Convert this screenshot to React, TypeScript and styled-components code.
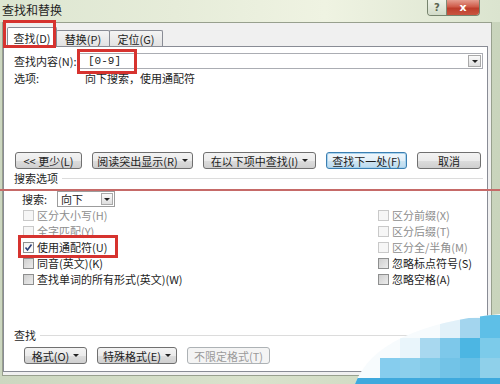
import React from "react";
import styled, { createGlobalStyle, css } from "styled-components";

const Global = createGlobalStyle`
  html, body { margin: 0; padding: 0; }
  body {
    width: 500px; height: 384px; overflow: hidden;
    font-family: "Noto Sans CJK SC", "Liberation Sans", sans-serif;
  }
`;

const Window = styled.div`
  position: relative;
  width: 500px;
  height: 384px;
  display: flex;
  flex-direction: column;
  overflow: hidden;
  background: linear-gradient(to right, #ccd7c0, #d9e2cc 50%, #c9d4bc);
  font-size: 11px;
  color: #1d1d1d;
`;

const TitleBar = styled.div`
  height: 22px;
  flex: none;
  display: flex;
  justify-content: space-between;
  align-items: flex-start;
  background: linear-gradient(to right, #dde6d1 0%, #e6ecd9 35%, #eff3e2 65%, #dbe4cf 100%);
`;

const Title = styled.div`
  padding: 2px 0 0 2px;
  font-size: 12px;
  line-height: 16px;
  color: #1f1f1f;
`;

const Caption = styled.div`
  display: flex;
  height: 15px;
  margin-right: 20px;
  border: 1px solid #76836d;
  border-top: none;
  border-radius: 0 0 4px 4px;
  overflow: hidden;
`;

const CapBtn = styled.div<{ $close?: boolean }>`
  display: flex;
  align-items: center;
  justify-content: center;
  font-family: "DejaVu Sans", sans-serif;
  font-weight: bold;
  ${(p) =>
    p.$close
      ? css`
          width: 32px;
          color: #fff;
          font-size: 11px;
          background: linear-gradient(#e59e90, #cf5b49 45%, #bd3d2b 55%, #c9543f);
        `
      : css`
          width: 18px;
          color: #59634f;
          font-size: 10px;
          border-right: 1px solid #7e8a76;
          background: linear-gradient(#eef2e8, #d2dbc8);
        `}
`;

const Client = styled.div`
  flex: 1;
  margin: 0 8px 8px 2px;
  display: flex;
  flex-direction: column;
  background: #f0f0f0;
  border: 1px solid #98a08e;
`;

const TabStrip = styled.div`
  height: 23px;
  flex: none;
  display: flex;
  align-items: flex-end;
  padding-left: 4px;
`;

const Tab = styled.div<{ $active?: boolean }>`
  box-sizing: border-box;
  display: flex;
  align-items: center;
  justify-content: center;
  border: 1px solid #898c95;
  border-bottom: none;
  border-radius: 2px 2px 0 0;
  font-size: 11px;
  ${(p) =>
    p.$active
      ? css`
          width: 50px;
          height: 20px;
          margin-bottom: -1px;
          background: #fff;
          position: relative;
          z-index: 1;
        `
      : css`
          width: 54px;
          height: 16px;
          margin-left: -1px;
          background: linear-gradient(#f4f4f4, #e2e2e2);
        `}
`;

const Panel = styled.div`
  flex: 1;
  margin: 0 3px 3px 0;
  padding: 6px 4px 0 10px;
  display: flex;
  flex-direction: column;
  background: #fff;
  border: 1px solid #898c95;
`;

const Row = styled.div<{ $mt?: number; $pl?: number; $h?: number }>`
  display: flex;
  align-items: center;
  height: ${(p) => p.$h ?? 16}px;
  margin-top: ${(p) => p.$mt ?? 0}px;
  padding-left: ${(p) => p.$pl ?? 0}px;
  flex: none;
`;

const Label = styled.span<{ $w?: number }>`
  width: ${(p) => (p.$w ? `${p.$w}px` : "auto")};
  flex: none;
  white-space: nowrap;
  line-height: 14px;
`;

const Input = styled.div`
  flex: 1;
  height: 16px;
  box-sizing: border-box;
  border: 1px solid #abadb3;
  display: flex;
  align-items: center;
  padding-left: 10px;
  font-family: "Liberation Mono", monospace;
  font-size: 11px;
`;

const Arrow = styled.span`
  display: inline-block;
  width: 0;
  height: 0;
  border-left: 3px solid transparent;
  border-right: 3px solid transparent;
  border-top: 3px solid #222;
`;

const DropBtn = styled.div<{ $w?: number }>`
  margin-left: auto;
  margin-right: 1px;
  width: ${(p) => p.$w ?? 13}px;
  height: 12px;
  box-sizing: border-box;
  border: 1px solid #a9a9a9;
  background: linear-gradient(#fafafa, #dedede);
  display: flex;
  align-items: center;
  justify-content: center;
`;

const ButtonRow = styled.div<{ $mt: number; $pl: number }>`
  display: flex;
  gap: 10px;
  height: 17px;
  flex: none;
  margin-top: ${(p) => p.$mt}px;
  padding-left: ${(p) => p.$pl}px;
`;

const Button = styled.div<{ $w: number; $focus?: boolean; $disabled?: boolean }>`
  width: ${(p) => p.$w}px;
  box-sizing: border-box;
  height: 17px;
  border: 1px solid #707070;
  border-radius: 3px;
  display: flex;
  align-items: center;
  justify-content: center;
  gap: 4px;
  white-space: nowrap;
  font-size: 11px;
  background: linear-gradient(#f3f3f3 0%, #ebebeb 50%, #dddddd 51%, #cfcfcf 100%);
  ${(p) =>
    p.$focus &&
    css`
      border-color: #3c7fb1;
      box-shadow: inset 0 0 0 1px #a9d3ee;
      background: linear-gradient(#f0f7fc 0%, #e2eff8 50%, #cfe5f3 51%, #bcdaee 100%);
    `}
  ${(p) =>
    p.$disabled &&
    css`
      border-color: #adb2b5;
      background: #f4f4f4;
      color: #9a9a9a;
    `}
`;

const Section = styled.div<{ $mt: number }>`
  display: flex;
  align-items: center;
  height: 14px;
  flex: none;
  margin-top: ${(p) => p.$mt}px;
  gap: 4px;
`;

const Rule = styled.div`
  flex: 1;
  height: 1px;
  background: #dcdcdc;
`;

const Select = styled.div`
  width: 58px;
  height: 16px;
  box-sizing: border-box;
  border: 1px solid #9c9c9c;
  display: flex;
  align-items: center;
  padding-left: 3px;
`;

const Grid = styled.div`
  display: grid;
  grid-template-columns: 355px 1fr;
  grid-template-rows: repeat(5, 16px);
  grid-auto-flow: column;
  padding-left: 9px;
  flex: none;
`;

const Check = styled.div<{ $disabled?: boolean }>`
  display: flex;
  align-items: center;
  gap: 3px;
  white-space: nowrap;
  color: ${(p) => (p.$disabled ? "#8e8e8e" : "#1d1d1d")};
`;

const Box = styled.span<{ $disabled?: boolean; $checked?: boolean }>`
  width: 11px;
  height: 11px;
  box-sizing: border-box;
  flex: none;
  display: flex;
  align-items: center;
  justify-content: center;
  border: 1px solid ${(p) => (p.$disabled ? "#c9c9c9" : "#8e8f8f")};
  background: ${(p) =>
    p.$disabled
      ? "#f6f6f6"
      : p.$checked
      ? "linear-gradient(#f2f2f2, #ffffff)"
      : "linear-gradient(135deg, #cfcfcf, #ececec)"};
`;

const RedMark = styled.div<{ $x: number; $y: number; $w: number; $h: number }>`
  position: absolute;
  left: ${(p) => p.$x}px;
  top: ${(p) => p.$y}px;
  width: ${(p) => p.$w}px;
  height: ${(p) => p.$h}px;
  box-sizing: border-box;
  border: 3px solid #d6332f;
  pointer-events: none;
  z-index: 5;
`;

const RedLine = styled.div`
  position: absolute;
  left: 0;
  right: 0;
  top: 189px;
  height: 2px;
  background: #c66a68;
  z-index: 5;
`;

const Watermark = styled.svg`
  position: absolute;
  right: 0;
  bottom: 0;
  z-index: 6;
`;

const CheckMark = () => (
  <svg width="9" height="9" viewBox="0 0 9 9">
    <path d="M1.5 4.5 L3.5 7 L7.5 1.5" fill="none" stroke="#2b3f78" strokeWidth="1.6" />
  </svg>
);

type Opt = { t: string; dis?: boolean; chk?: boolean };
const opts: Opt[] = [
  { t: "区分大小写(H)", dis: true },
  { t: "全字匹配(Y)", dis: true },
  { t: "使用通配符(U)", chk: true },
  { t: "同音(英文)(K)" },
  { t: "查找单词的所有形式(英文)(W)" },
  { t: "区分前缀(X)", dis: true },
  { t: "区分后缀(T)", dis: true },
  { t: "区分全/半角(M)", dis: true },
  { t: "忽略标点符号(S)" },
  { t: "忽略空格(A)" },
];

const squares: [number, number, string][] = [
  [85, 6, "#e2f1f9"], [105, 6, "#a3d5ee"], [125, 3, "#5ebfe7"],
  [45, 26, "#e9f5fb"], [65, 26, "#a8d8ef"], [85, 26, "#7dc8ea"], [105, 26, "#4cb6e3"], [125, 26, "#7ccbea"],
  [25, 46, "#86cdee"], [45, 46, "#8ccfec"], [65, 46, "#82cbe9"], [85, 46, "#72c3e7"], [105, 46, "#66bfe6"], [125, 46, "#8fd0ea"],
];

export default function App() {
  return (
    <>
      <Global />
      <Window>
        <TitleBar>
          <Title>查找和替换</Title>
          <Caption>
            <CapBtn>?</CapBtn>
            <CapBtn $close>x</CapBtn>
          </Caption>
        </TitleBar>
        <Client>
          <TabStrip>
            <Tab $active>查找(D)</Tab>
            <Tab>替换(P)</Tab>
            <Tab>定位(G)</Tab>
          </TabStrip>
          <Panel>
            <Row>
              <Label $w={63}>查找内容(N):</Label>
              <Input>
                [0-9]
                <DropBtn>
                  <Arrow />
                </DropBtn>
              </Input>
            </Row>
            <Row $mt={2} $h={14}>
              <Label $w={71}>选项:</Label>
              <Label>向下搜索，使用通配符</Label>
            </Row>
            <ButtonRow $mt={67} $pl={1}>
              <Button $w={67}>&lt;&lt; 更少(L)</Button>
              <Button $w={101}>
                阅读突出显示(R) <Arrow />
              </Button>
              <Button $w={113}>
                在以下项中查找(I) <Arrow />
              </Button>
              <Button $w={81} $focus>
                查找下一处(F)
              </Button>
              <Button $w={64}>取消</Button>
            </ButtonRow>
            <Section $mt={2}>
              <Label>搜索选项</Label>
              <Rule />
            </Section>
            <Row $mt={6} $pl={8}>
              <Label $w={35}>搜索:</Label>
              <Select>
                向下
                <DropBtn $w={12}>
                  <Arrow />
                </DropBtn>
              </Select>
            </Row>
            <Grid>
              {opts.map((o) => (
                <Check key={o.t} $disabled={o.dis}>
                  <Box $disabled={o.dis} $checked={o.chk}>
                    {o.chk && <CheckMark />}
                  </Box>
                  {o.t}
                </Check>
              ))}
            </Grid>
            <Section $mt={41}>
              <Label>查找</Label>
              <Rule />
            </Section>
            <ButtonRow $mt={5} $pl={10}>
              <Button $w={63}>
                格式(O) <Arrow />
              </Button>
              <Button $w={80}>
                特殊格式(E) <Arrow />
              </Button>
              <Button $w={83} $disabled>
                不限定格式(T)
              </Button>
            </ButtonRow>
          </Panel>
        </Client>
        <RedMark $x={3} $y={20} $w={53} $h={28} />
        <RedMark $x={77} $y={49} $w={60} $h={25} />
        <RedMark $x={18} $y={235} $w={100} $h={23} />
        <RedLine />
        <Watermark width="145" height="72" viewBox="0 0 145 72">
          <defs>
            <clipPath id="wm">
              <path d="M0 72 Q22 14 145 2 L145 72 Z" />
            </clipPath>
          </defs>
          <path d="M0 72 Q22 14 145 2 L145 72 Z" fill="#f7fbfd" />
          <g clipPath="url(#wm)">
            {squares.map(([x, y, c], i) => (
              <rect key={i} x={x} y={y} width="20" height={y === 3 ? 23 : 20} fill={c} />
            ))}
            <rect x="0" y="66" width="145" height="6" fill="#3fa9dd" />
          </g>
        </Watermark>
      </Window>
    </>
  );
}
